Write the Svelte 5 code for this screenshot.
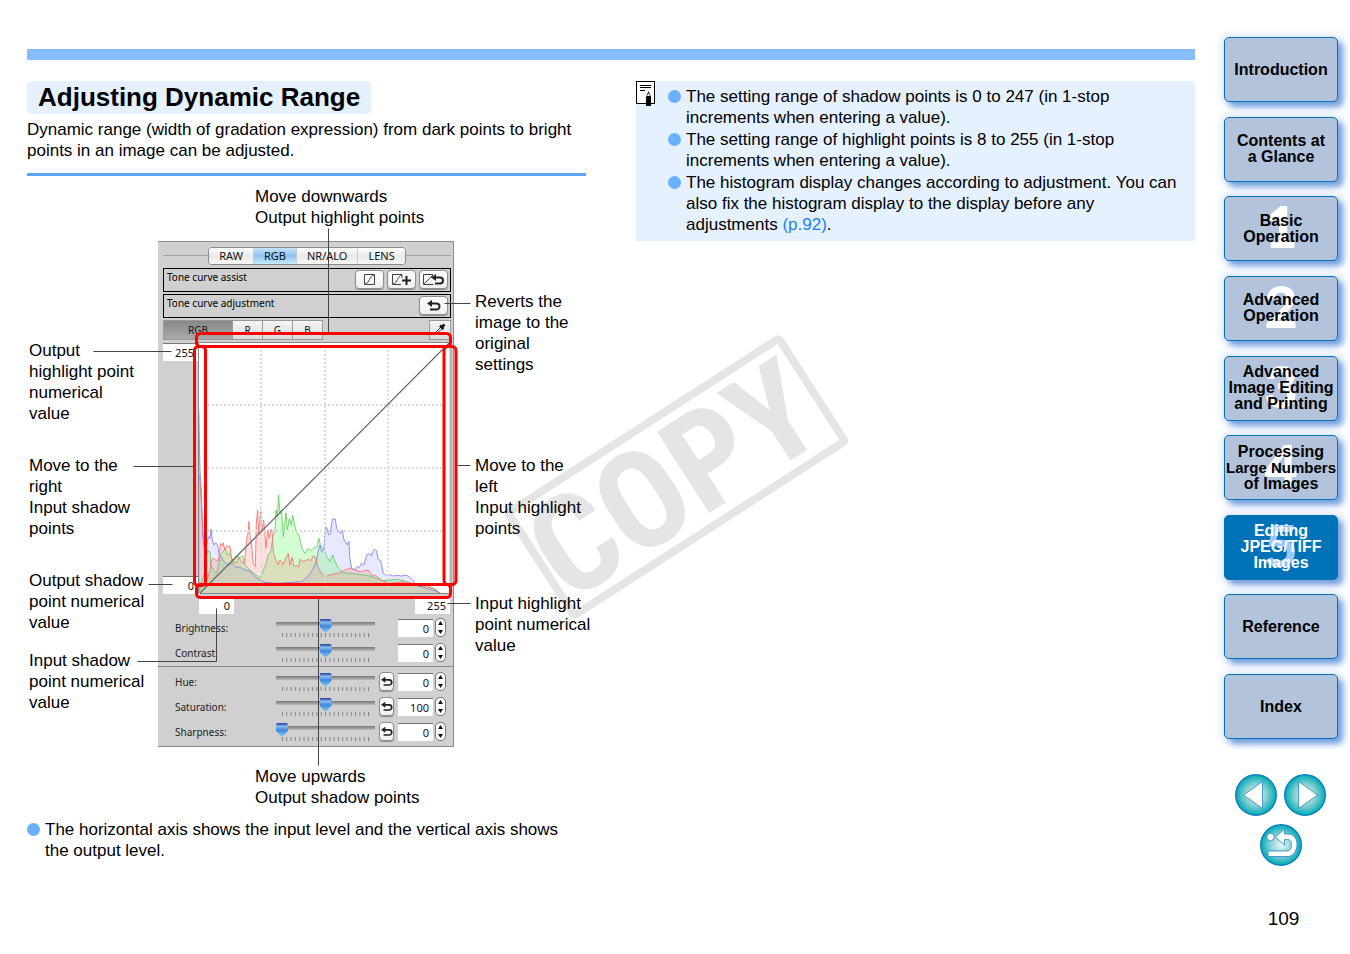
<script>
  const chapters = [
    { lines: ['Introduction'] },
    { lines: ['Contents at', 'a Glance'] },
    { lines: ['Basic', 'Operation'], number: 1 },
    { lines: ['Advanced', 'Operation'], number: 2 },
    { lines: ['Advanced', 'Image Editing', 'and Printing'], number: 3 },
    { lines: ['Processing', 'Large Numbers', 'of Images'], number: 4 },
    { lines: ['Editing', 'JPEG/TIFF', 'Images'], number: 5 },
    { lines: ['Reference'] },
    { lines: ['Index'] }
  ];

  const tabs = ['RAW', 'RGB', 'NR/ALO', 'LENS'];
  const channels = ['RGB', 'R', 'G', 'B'];

  let activeChapter = $state(6);
  let activeTab = $state('RGB');
  let activeChannel = $state('RGB');

  let toneSliders = $state([
    { id: 'brightness', label: 'Brightness:', pos: 50, value: '0' },
    { id: 'contrast', label: 'Contrast:', pos: 50, value: '0' }
  ]);
  let colorSliders = $state([
    { id: 'hue', label: 'Hue:', pos: 50, value: '0', reset: true },
    { id: 'saturation', label: 'Saturation:', pos: 50, value: '100', reset: true },
    { id: 'sharpness', label: 'Sharpness:', pos: 0, value: '0', reset: true }
  ]);

  const ticks = Array.from({ length: 21 }, (_, i) => i);

  // Histogram outlines, three units to the pixel, baseline at y = 370
  const blue = '146,370 146,-180 150,0 154,60 158,200 165,250 172,215 176,200 180,205 183,178 187,210 192,225 197,218 203,225 207,250 215,262 222,275 235,285 245,280 255,290 270,292 285,300 300,303 320,325 345,337 380,340 455,335 475,318 490,295 500,270 505,240 510,225 515,245 522,235 526,175 530,172 536,195 541,190 545,160 548,147 556,147 560,175 566,185 572,190 577,180 582,210 587,215 592,225 597,215 599,260 605,295 615,300 620,290 628,292 634,280 642,285 650,255 658,250 665,258 668,245 674,238 680,242 684,268 692,272 700,310 710,317 720,314 730,318 742,316 755,318 768,315 778,320 790,332 796,345 830,355 870,368 870,370';
  const red = '146,370 146,10 150,30 155,120 160,190 165,260 172,330 180,300 184,270 190,265 197,270 205,272 212,220 218,228 220,218 224,240 230,228 236,230 240,228 244,262 250,275 260,280 266,262 275,275 283,280 288,230 291,200 294,190 297,155 300,195 305,225 310,280 316,290 319,160 323,120 326,195 332,118 336,180 341,150 344,180 348,235 353,180 358,205 362,180 366,178 370,245 376,265 385,285 390,270 395,275 400,285 408,262 415,250 420,285 426,262 432,290 440,285 446,292 450,268 460,275 475,268 482,272 490,258 497,262 503,290 515,312 530,318 550,312 570,308 585,300 600,294 615,300 630,305 655,300 665,315 680,318 695,332 720,340 760,335 790,342 830,350 850,356 870,370';
  const green = '146,370 165,300 172,240 180,245 183,285 190,300 200,310 212,255 226,235 232,255 240,250 250,280 262,258 270,262 278,258 285,285 300,300 330,325 345,290 355,255 362,245 370,195 375,185 378,120 382,140 386,75 390,130 394,120 400,200 408,128 412,180 418,145 424,165 428,135 434,165 440,188 447,195 456,235 465,250 475,235 482,242 490,235 500,232 507,205 512,230 522,235 530,260 540,275 548,255 555,275 565,295 580,308 620,312 660,318 700,332 745,328 780,338 810,350 830,345 860,360 870,370';

  const leaders = [
    'M328 228V334', 'M318 598V765',
    'M93 351H171', 'M133 466H194', 'M148 584H172', 'M137 661H216V608',
    'M444 303H470', 'M457 465H470', 'M447 603H470'
  ];
</script>

{#snippet undo(size)}
  <svg width={size} height={size} viewBox="0 0 14 14" aria-hidden="true">
    <path d="M4 4.5H9.5A2.8 2.8 0 0 1 9.5 10.5H3" fill="none" stroke="#222" stroke-width="2" />
    <path d="M0 4.5L5 1V8Z" fill="#222" />
  </svg>
{/snippet}

{#snippet sliderRow(item)}
  <div class="slider-row">
    <label for={item.id}>{item.label}</label>
    <div class="slider">
      <input type="range" id={item.id} min="0" max="100" bind:value={item.pos} />
      <svg class="ticks" width="99" height="5" viewBox="0 0 99 5" aria-hidden="true">
        {#each ticks as t}
          <path d="M{6.5 + t * 4.3} 0V4" stroke="#858585" />
        {/each}
      </svg>
    </div>
    {#if item.reset}
      <button class="mac-button reset" aria-label="Reset {item.id}">{@render undo(12)}</button>
    {:else}
      <span></span>
    {/if}
    <input class="number" type="text" aria-label="{item.id} value" bind:value={item.value} />
    <span class="stepper">
      <button aria-label="Increase {item.id}"><svg width="5" height="4" viewBox="0 0 5 4"><path d="M0 4L2.5 0L5 4Z" fill="#111" /></svg></button>
      <button aria-label="Decrease {item.id}"><svg width="5" height="4" viewBox="0 0 5 4"><path d="M0 0L2.5 4L5 0Z" fill="#111" /></svg></button>
    </span>
  </div>
{/snippet}

<div class="page">
  <main>
    <div class="top-bar"></div>

    <svg class="watermark" width="346" height="286" viewBox="504 334 346 286" aria-hidden="true">
      <g transform="translate(676.5 477) rotate(-32.8)">
        <rect x="-161" y="-61" width="322" height="122" rx="2" />
        <text x="-4" y="48" text-anchor="middle">COPY</text>
      </g>
    </svg>

    <div class="columns">
      <section>
        <h1>Adjusting Dynamic Range</h1>
        <p class="lead">Dynamic range (width of gradation expression) from dark points to bright points in an image can be adjusted.</p>
        <hr />

        <figure>
          <p class="caption">Move downwards<br />Output highlight points</p>

          <div class="diagram">
            <div class="notes left">
              <p>Output<br />highlight point<br />numerical<br />value</p>
              <p>Move to the<br />right<br />Input shadow<br />points</p>
              <p>Output shadow<br />point numerical<br />value</p>
              <p>Input shadow<br />point numerical<br />value</p>
            </div>

            <div class="palette">
              <div class="tabs">
                <div class="segmented">
                  {#each tabs as tab}
                    <button class:active={tab === activeTab} onclick={() => (activeTab = tab)}>{tab}</button>
                  {/each}
                </div>
              </div>

              <div class="tool-box">
                <span>Tone curve assist</span>
                <div class="tool-buttons">
                  <button class="mac-button" aria-label="Assist">
                    <svg width="13" height="13" viewBox="0 0 13 13"><path d="M1.5 1.5H11.5V11.5H1.5ZM2 11C7 10 6 3 11 2" fill="none" stroke="#444" /></svg>
                  </button>
                  <button class="mac-button" aria-label="Assist strong">
                    <svg width="21" height="13" viewBox="0 0 21 13"><path d="M11 1.5H1.5V11.5H10M2 11C7 10 6 3 11 2V5" fill="none" stroke="#444" /><path d="M11 7.5H20M15.5 3V12" stroke="#222" stroke-width="2" /></svg>
                  </button>
                  <button class="mac-button" aria-label="Assist reset">
                    <svg width="23" height="13" viewBox="0 0 23 13"><path d="M11 1.5H1.5V11.5H11.5M2 11L11 2" fill="none" stroke="#444" /><path d="M13 4.5H18A3 3 0 0 1 18 10.5H13" fill="none" stroke="#222" stroke-width="2" /><path d="M9 4.5L14 1V8Z" fill="#222" /></svg>
                  </button>
                </div>
              </div>

              <div class="tool-box">
                <span>Tone curve adjustment</span>
                <div class="tool-buttons">
                  <button class="mac-button" aria-label="Revert">{@render undo(14)}</button>
                </div>
              </div>

              <div class="channels">
                {#each channels as channel}
                  <button class:active={channel === activeChannel} onclick={() => (activeChannel = channel)}>{channel}</button>
                {/each}
                <button class="dropper" aria-label="Eyedropper">
                  <svg width="14" height="14" viewBox="0 0 14 14"><path d="M2 12L3 10L8 5L9.5 6.5L4 11Z" fill="#fff" stroke="#444" /><path d="M7 3.5L10.5 7M8.5 5.5L11.5 2.5" stroke="#111" stroke-width="2.5" /></svg>
                </button>
              </div>

              <div class="curve">
                <div class="outputs">
                  <input class="number" type="text" aria-label="Output highlight" value="255" />
                  <input class="number" type="text" aria-label="Output shadow" value="0" />
                </div>
                <svg class="graph" width="254" height="252" viewBox="198 342 254 252" role="img" aria-label="Histogram">
                  <rect x="198" y="342" width="254" height="252" fill="#fff" />
                  <g transform="translate(150 470) scale(0.3333)">
                    <polygon points={blue} fill="#7878ff" fill-opacity="0.17" />
                    <polygon points={green} fill="#50ff50" fill-opacity="0.25" />
                    <polygon points={red} fill="#ff6e6e" fill-opacity="0.22" />
                    <polyline points={green} fill="none" stroke="#5bc95b" stroke-width="3" stroke-opacity="0.8" />
                    <polyline points={blue} fill="none" stroke="#8080ee" stroke-width="3" stroke-opacity="0.85" />
                    <polyline points={red} fill="none" stroke="#f37070" stroke-width="3" stroke-opacity="0.85" />
                  </g>
                  <path d="M261 346V590M325 346V590M388 346V590M204 405H446M204 468H446M204 531H446" stroke="#dcdcdc" stroke-width="2" stroke-dasharray="2 2" />
                  <path d="M200 593L450 342" stroke="#666" stroke-width="1.2" />
                  <path d="M198 342.5H452M198.5 342V594M200 593.5H450" stroke="#888" fill="none" />
                  <path d="M451 343V593" stroke="#b5b5b5" stroke-width="3" />
                </svg>
              </div>

              <div class="inputs">
                <input class="number" type="text" aria-label="Input shadow" value="0" />
                <input class="number" type="text" aria-label="Input highlight" value="255" />
              </div>

              <div class="sliders">
                {#each toneSliders as item}
                  {@render sliderRow(item)}
                {/each}
              </div>
              <div class="sliders ruled">
                {#each colorSliders as item}
                  {@render sliderRow(item)}
                {/each}
              </div>
            </div>

            <div class="notes right">
              <p>Reverts the<br />image to the<br />original<br />settings</p>
              <p>Move to the<br />left<br />Input highlight<br />points</p>
              <p>Input highlight<br />point numerical<br />value</p>
            </div>
          </div>

          <p class="caption">Move upwards<br />Output shadow points</p>

          <!-- leader lines and marked areas over the palette -->
          <svg class="overlay" width="559" height="622" viewBox="27 186 559 622" aria-hidden="true">
            <g transform="translate(0.5 0.5)" fill="none" stroke="#444">
              {#each leaders as d}
                <path {d} />
              {/each}
            </g>
            <g fill="none" stroke="#f00" stroke-width="3">
              <rect x="196.5" y="333.5" width="254" height="13" rx="4" />
              <rect x="194.5" y="346.5" width="11" height="239" rx="4" />
              <rect x="444" y="346.5" width="12" height="238" rx="4" />
              <rect x="196.5" y="584.5" width="254" height="13" rx="4" />
            </g>
          </svg>
        </figure>

        <ul>
          <li>The horizontal axis shows the input level and the vertical axis shows the output level.</li>
        </ul>
      </section>

      <aside>
        <svg width="20" height="26" viewBox="0 0 20 26" aria-hidden="true">
          <rect x="0.5" y="0.5" width="18" height="22" fill="#fff" stroke="#000" />
          <path d="M4 4.5H15M4 6.5H15M4 9.5H9" stroke="#000" />
          <path d="M10 16L12.5 10L15 16V25H10Z" fill="#000" />
          <path d="M11 15L12.5 12L14 15Z" fill="#fff" />
        </svg>
        <ul>
          <li>The setting range of shadow points is 0 to 247 (in 1-stop increments when entering a value).</li>
          <li>The setting range of highlight points is 8 to 255 (in 1-stop increments when entering a value).</li>
          <li>The histogram display changes according to adjustment. You can also fix the histogram display to the display before any adjustments <a href="#p92">(p.92)</a>.</li>
        </ul>
      </aside>
    </div>
  </main>

  <div class="sidebar">
    <nav>
      {#each chapters as chapter, i}
        <a href="#chapter-{i}" class:active={i === activeChapter} onclick={() => (activeChapter = i)}>
          {#if chapter.number}<span class="big">{chapter.number}</span>{/if}
          {#each chapter.lines as line}
            <span class="line" class:long={line === 'Large Numbers'}>{line}</span>
          {/each}
        </a>
      {/each}
    </nav>

    <div class="pager">
      <a href="#previous" aria-label="Previous page">
        <svg width="42" height="42" viewBox="0 0 42 42">
          <defs>
            <radialGradient id="disc">
              <stop offset="0" stop-color="#e8f6f6" />
              <stop offset="0.5" stop-color="#8fd3d6" />
              <stop offset="1" stop-color="#00aab4" />
            </radialGradient>
          </defs>
          <circle cx="21" cy="21" r="20.3" fill="url(#disc)" stroke="#0a7fc0" stroke-width="1.4" />
          <path d="M8.5 21L27.5 7.5V34.5Z" fill="#fff" stroke="#2a84c6" stroke-width="0.8" />
        </svg>
      </a>
      <a href="#next" aria-label="Next page">
        <svg width="42" height="42" viewBox="0 0 42 42">
          <circle cx="21" cy="21" r="20.3" fill="url(#disc)" stroke="#0a7fc0" stroke-width="1.4" />
          <path d="M33.5 21L14.5 7.5V34.5Z" fill="#fff" stroke="#2a84c6" stroke-width="0.8" />
        </svg>
      </a>
      <a href="#back" aria-label="Back">
        <svg width="42" height="42" viewBox="0 0 42 42">
          <circle cx="21" cy="21" r="20.3" fill="url(#disc)" stroke="#0a7fc0" stroke-width="1.4" />
          <g fill="#fff" stroke="#2a84c6" stroke-width="0.8">
            <circle cx="10.5" cy="13" r="3.7" />
            <path d="M15.5 13L24.5 5V10H28C34 10 37 15 37 20.5C37 27 33 32.5 28 32.5H8V27H27C30 27 31.5 24 31.5 20.5C31.5 17.5 30 15.5 27.5 15.5H24.5V21Z" />
          </g>
        </svg>
      </a>
    </div>

    <div class="page-number">109</div>
  </div>
</div>

<style>
  :global(body) {
    background: #fff;
    color: #000;
    font: 17px/21px "Liberation Sans", Arial, sans-serif;
  }

  .page {
    display: flex;
    gap: 28px;
    padding: 0 12px 0 27px;
  }

  main {
    flex: 1;
    position: relative;
    padding-top: 49px;
  }

  .top-bar {
    height: 11px;
    background: #85bdff;
  }

  .watermark {
    position: absolute;
    left: 477px;
    top: 334px;
    z-index: -1;
  }

  .watermark rect {
    fill: none;
    stroke: #e5e5e5;
    stroke-width: 8px;
  }

  .watermark text {
    fill: #e5e5e5;
    font: bold 136px "Liberation Sans Narrow", "Roboto Condensed", Roboto, sans-serif;
  }

  .columns {
    display: grid;
    grid-template-columns: minmax(0, 1fr) minmax(0, 1fr);
    gap: 50px;
    align-items: start;
    padding-top: 21px;
  }

  h1 {
    width: fit-content;
    margin: 0;
    padding: 0 11px;
    border-radius: 5px;
    background: #e5f1ff;
    font-size: 26px;
    line-height: 33px;
  }

  p {
    margin: 0;
  }

  .lead {
    padding-top: 5px;
  }

  hr {
    height: 3px;
    margin: 12px 0 10px;
    border: 0;
    background: #5ca5fb;
  }

  figure {
    position: relative;
    margin: 0;
  }

  .caption {
    padding-left: 228px;
  }

  .diagram {
    display: grid;
    grid-template-columns: 131px 296px 1fr;
    margin: 13px 0 19px;
  }

  .notes {
    white-space: nowrap;
  }

  .left {
    padding: 99px 0 0 2px;
  }

  .left p + p {
    margin-top: 31px;
  }

  .left p:last-child {
    margin-top: 17px;
  }

  .right {
    padding: 50px 0 0 21px;
  }

  .right p + p {
    margin-top: 80px;
  }

  .right p:last-child {
    margin-top: 54px;
  }

  .overlay {
    position: absolute;
    left: 0;
    top: 0;
    pointer-events: none;
  }

  ul {
    margin: 0;
    padding: 0 5px 0 0;
    list-style: none;
  }

  li {
    position: relative;
    padding-left: 18px;
  }

  li::before {
    content: "";
    position: absolute;
    left: 0;
    top: 4px;
    width: 13px;
    height: 13px;
    border-radius: 50%;
    background: #6bb0ff;
  }

  figure + ul {
    padding-top: 11px;
  }

  aside {
    display: flex;
    gap: 12px;
    min-height: 160px;
    background: #e5f1ff;
  }

  aside svg {
    flex: none;
  }

  aside ul {
    padding-top: 5px;
  }

  aside li + li {
    margin-top: 1px;
  }

  aside a {
    color: #1a80ff;
    text-decoration: none;
  }

  /* palette window */
  .palette {
    box-sizing: border-box;
    height: 506px;
    padding: 0 2px 0 5px;
    border: solid #8c8c8c;
    border-width: 1px 1px 1px 0;
    background: #d0d0d0;
    font: 10px/14px "Noto Sans", "Lucida Grande", sans-serif;
  }

  .palette button,
  .palette input {
    box-sizing: border-box;
    margin: 0;
    padding: 0;
    color: #111;
    font: inherit;
  }

  .tabs {
    display: flex;
    justify-content: center;
    margin: 5px 0 3px;
    background: linear-gradient(#a6a6a6, #a6a6a6) 0 8px / 100% 1px no-repeat;
  }

  .segmented {
    display: flex;
    overflow: hidden;
    height: 18px;
    border: 1px solid #8a8a8a;
    border-radius: 4px;
    box-sizing: border-box;
  }

  .palette .segmented button {
    padding: 0 10px;
    border: 0;
    background: linear-gradient(#fff, #e9e9e9 50%, #f8f8f8);
    font-size: 11px;
  }

  .palette .segmented button + button {
    border-left: 1px solid #ccc;
  }

  .palette .segmented .active {
    background: linear-gradient(#c9e2fa, #8ec3f3 50%, #c5ecff);
  }

  .tool-box {
    display: flex;
    justify-content: space-between;
    box-sizing: border-box;
    height: 24px;
    margin-bottom: 2px;
    padding: 1px 2px 0 3px;
    border: 1px solid #000;
  }

  .tool-buttons {
    display: flex;
    gap: 3px;
  }

  .mac-button {
    display: grid;
    place-items: center;
    width: 29px;
    height: 19px;
    border: 1px solid #8f8f8f;
    border-radius: 4px;
    background: linear-gradient(#fff, #f0f0f0);
    box-shadow: 0 1px 1px #888;
  }

  .channels {
    display: flex;
    height: 20px;
    margin-bottom: 2px;
  }

  .channels button {
    width: 30px;
    border: 1px solid #999;
    border-left-width: 0;
    background: linear-gradient(#f4f4f4, #dcdcdc);
  }

  .channels button:first-child {
    width: 70px;
    border-left-width: 1px;
  }

  .channels .active {
    background: linear-gradient(#888, #aaa);
  }

  .channels .dropper {
    width: 22px;
    margin-left: auto;
    border-left-width: 1px;
  }

  .curve {
    display: flex;
  }

  .outputs {
    display: flex;
    flex-direction: column;
    justify-content: space-between;
    padding-top: 1px;
  }

  .number {
    width: 35px;
    height: 18px;
    border: 0;
    border-top: 1px solid #777;
    border-radius: 0;
    background: #fff;
    text-align: right;
  }

  .palette .number {
    padding-right: 4px;
    font-size: 11px;
  }

  .graph {
    display: block;
    flex: none;
  }

  .inputs {
    display: flex;
    justify-content: space-between;
    padding: 2px 1px 0 36px;
  }

  .sliders {
    padding: 1px 4px 0 12px;
  }

  .ruled {
    margin: 1px -2px 0 -5px;
    padding: 2px 6px 0 17px;
    border-top: 1px solid #888;
  }

  .slider-row {
    display: grid;
    grid-template-columns: 101px 99px 17px 35px 11px;
    column-gap: 2px;
    align-items: center;
    height: 25px;
  }

  .slider-row label {
    color: #222;
  }

  .slider {
    display: grid;
    margin-left: -2px;
    padding-top: 2px;
  }

  .slider-row .number {
    justify-self: end;
  }

  .palette input[type="range"] {
    appearance: none;
    width: 99px;
    height: 14px;
    background: linear-gradient(#777, #bbb) 0 3px / 100% 4px no-repeat;
  }

  input[type="range"]::-webkit-slider-thumb {
    appearance: none;
    width: 12px;
    height: 14px;
    background: linear-gradient(#1c3f9a, #8ebcf0 25%, #3f86dc 50%, #7fd4fa);
    clip-path: polygon(0 10%, 10% 0, 90% 0, 100% 10%, 100% 55%, 50% 100%, 0 55%);
  }

  .ticks {
    display: block;
  }

  .palette .reset {
    width: 15px;
    height: 19px;
  }

  .stepper {
    display: flex;
    flex-direction: column;
    box-sizing: border-box;
    width: 11px;
    height: 19px;
    border: 1px solid #777;
    border-radius: 5px;
    background: #fff;
  }

  .stepper button {
    display: grid;
    flex: 1;
    place-items: center;
    border: 0;
    background: none;
  }

  /* chapter navigation */
  .sidebar {
    width: 115px;
    padding-top: 37px;
  }

  nav {
    display: flex;
    flex-direction: column;
    justify-content: space-between;
    height: 702px;
  }

  nav a {
    position: relative;
    display: flex;
    flex-direction: column;
    align-items: center;
    justify-content: center;
    box-sizing: border-box;
    height: 65px;
    margin-left: 1px;
    border: 1px solid #0072b8;
    border-radius: 5px;
    background: #b3c3db;
    box-shadow: 5px 5px 6px #739fdf, 0 0 8px 3px #dfe7f8;
    color: #000;
    font-size: 16px;
    font-weight: bold;
    line-height: 16px;
    text-decoration: none;
    white-space: nowrap;
  }

  .line {
    position: relative;
  }

  .long {
    font-size: 15px;
  }

  .big {
    position: absolute;
    inset: 0;
    color: #fff;
    font: 900 58px/58px Lato, sans-serif;
    text-align: center;
  }

  nav .active {
    background: #0072b8;
    color: #fff;
  }

  .active .big {
    color: #99c8ff;
  }

  .pager {
    display: flex;
    flex-wrap: wrap;
    justify-content: center;
    gap: 8px 7px;
    padding-top: 35px;
  }

  .pager svg {
    display: block;
  }

  .page-number {
    padding: 42px 0 20px 6px;
    font-size: 19px;
    text-align: center;
  }
</style>
